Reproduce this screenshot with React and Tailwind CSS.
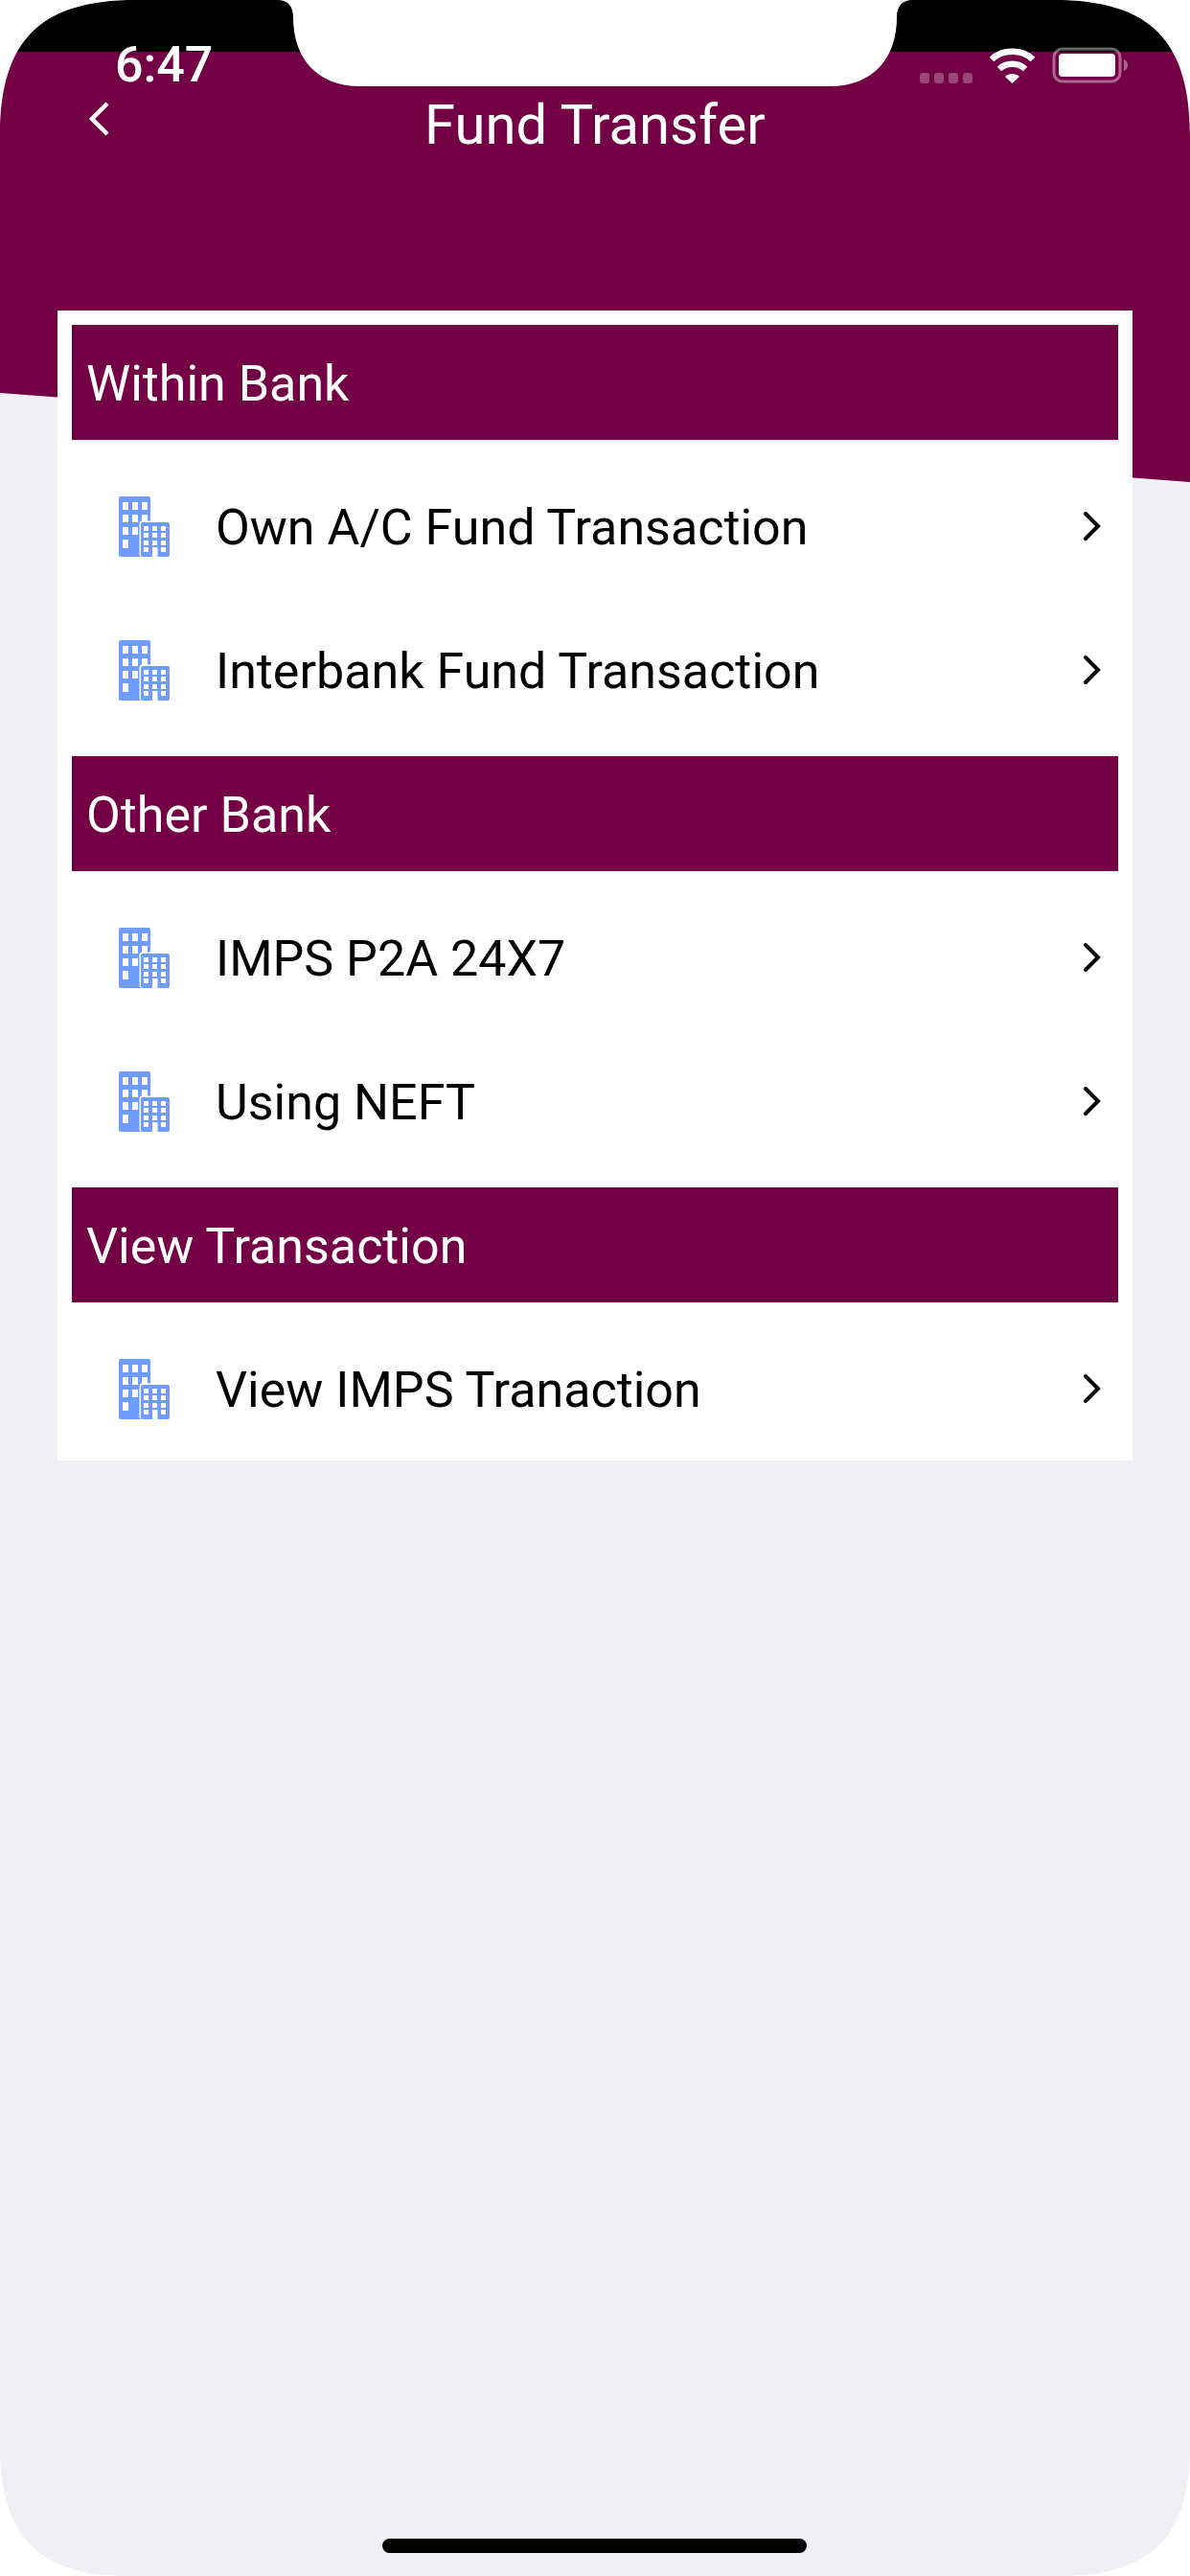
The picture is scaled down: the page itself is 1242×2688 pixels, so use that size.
import React from 'react';

const sections = [
  { title: 'Within Bank', items: ['Own A/C Fund Transaction', 'Interbank Fund Transaction'] },
  { title: 'Other Bank', items: ['IMPS P2A 24X7', 'Using NEFT'] },
  { title: 'View Transaction', items: ['View IMPS Tranaction'] },
];

const BuildingIcon = () => (
  <svg width="53" height="63" viewBox="0 0 53 63" className="shrink-0">
    <path d="M2 0H31a2 2 0 0 1 2 2V26H24V63H2a2 2 0 0 1-2-2V2a2 2 0 0 1 2-2Z" fill="#6f9cff" />
    <g fill="#fff">
      {[6, 19, 32].map((y) =>
        [4, 14, 24].map((x) => (x === 24 && y === 32 ? null : <rect key={`${x}-${y}`} x={x} y={y} width="6" height="8" />))
      )}
      <rect x="4" y="45" width="6" height="9" />
    </g>
    <rect x="21.5" y="25.5" width="31.5" height="37.5" rx="3" fill="#fff" />
    <rect x="23" y="27" width="30" height="36" rx="2" fill="#6f9cff" />
    <g fill="#fff">
      {[31, 38, 46, 53].map((y) =>
        [26, 35, 44].map((x) => <rect key={`${x}-${y}`} x={x} y={y} width="5" height="5" />)
      )}
      <rect x="35" y="53" width="5.5" height="10" />
    </g>
  </svg>
);

const ChevronRight = () => (
  <svg width="20" height="32" viewBox="0 0 20 32" className="shrink-0" fill="none" stroke="#000" strokeWidth="4" strokeLinecap="round" strokeLinejoin="miter">
    <polyline points="3,3 16,16 3,29" />
  </svg>
);

const StatusIcons = () => (
  <svg width="217" height="40" viewBox="0 0 217 40" className="shrink-0">
    <g fill="#fff" fillOpacity="0.28">
      <rect x="0" y="28" width="10" height="11" rx="3" />
      <rect x="15" y="28" width="10" height="11" rx="3" />
      <rect x="30" y="28" width="10" height="11" rx="3" />
      <rect x="45" y="28" width="10" height="11" rx="3" />
    </g>
    <g fill="none" stroke="#fff" strokeWidth="6.5">
      <path d="M75 14 C86 3 107 3 118 14" />
      <path d="M83 24 C90 17 103 17 110 24" />
    </g>
    <path d="M89 32 C93 28 100 28 104 32 L96.5 39 Z" fill="#fff" />
    <rect x="140" y="3" width="69" height="34" rx="9" fill="none" stroke="#fff" strokeOpacity="0.4" strokeWidth="3" />
    <rect x="145" y="8" width="59" height="24" rx="4" fill="#fff" />
    <path d="M213 14 C216 15 217 18 217 20 C217 22 216 25 213 26 Z" fill="#fff" fillOpacity="0.4" />
  </svg>
);

// white cut-outs of the phone frame: the four corners and the notch
const DeviceMask = () => (
  <svg width="1242" height="2688" viewBox="0 0 1242 2688" className="absolute inset-0 pointer-events-none">
    <g fill="#fff">
      <path d="M0 0H142C42 0 0 42 0 142Z" />
      <path d="M1242 0H1100C1200 0 1242 42 1242 142Z" />
      <path d="M0 2688H135C40 2688 0 2646 0 2553Z" />
      <path d="M1242 2688H1107C1202 2688 1242 2646 1242 2553Z" />
      <path d="M290 0C300 0 306 6 306 18C306 60 330 90 376 90H866C912 90 936 60 936 18C936 6 942 0 952 0Z" />
    </g>
  </svg>
);

export default function App() {
  return (
    <div className="relative w-[1242px] h-[2688px] overflow-hidden bg-[#efeff4] font-['Roboto',sans-serif]">
      <svg width="1242" height="510" viewBox="0 0 1242 510" className="absolute top-0 left-0">
        <polygon points="0,0 1242,0 1242,503 0,410" fill="#730044" />
        <rect x="0" y="0" width="1242" height="54" fill="#000" />
      </svg>

      <div className="relative flex flex-col">
        <div className="flex items-start justify-between h-[90px] pt-[39px] pl-[120px] pr-[65px]">
          <span className="text-[52px] leading-[58px] font-medium text-white">6:47</span>
          <div className="pt-[9px]">
            <StatusIcons />
          </div>
        </div>

        <div className="relative flex items-center justify-center h-[80px]">
          <svg width="24" height="36" viewBox="0 0 24 36" className="absolute left-[91px] top-[16px]" fill="none" stroke="#fff" strokeWidth="4.5">
            <polyline points="21,2 5,18 21,34" />
          </svg>
          <h1 className="text-[58px] leading-[80px] font-normal text-white">Fund Transfer</h1>
        </div>

        <div className="mx-[60px] mt-[154px] bg-white pt-[15px]">
          {sections.map((section) => (
            <div key={section.title}>
              <div className="flex items-center h-[120px] mx-[15px] pl-[15px] pt-[3px] bg-[#730044] text-white text-[52px] leading-[60px]">
                {section.title}
              </div>
              <div className={section.items.length > 1 ? 'py-[15px]' : 'pt-[15px]'}>
                {section.items.map((item) => (
                  <div key={item} className="flex items-center h-[150px] pl-[64px] pr-[32px]">
                    <BuildingIcon />
                    <span className="ml-[48px] flex-1 pt-[3px] text-[52px] leading-[60px] text-black">{item}</span>
                    <ChevronRight />
                  </div>
                ))}
              </div>
            </div>
          ))}
        </div>
      </div>

      <DeviceMask />
      <div className="absolute left-[399px] top-[2649px] w-[443px] h-[15px] rounded-full bg-black" />
    </div>
  );
}
